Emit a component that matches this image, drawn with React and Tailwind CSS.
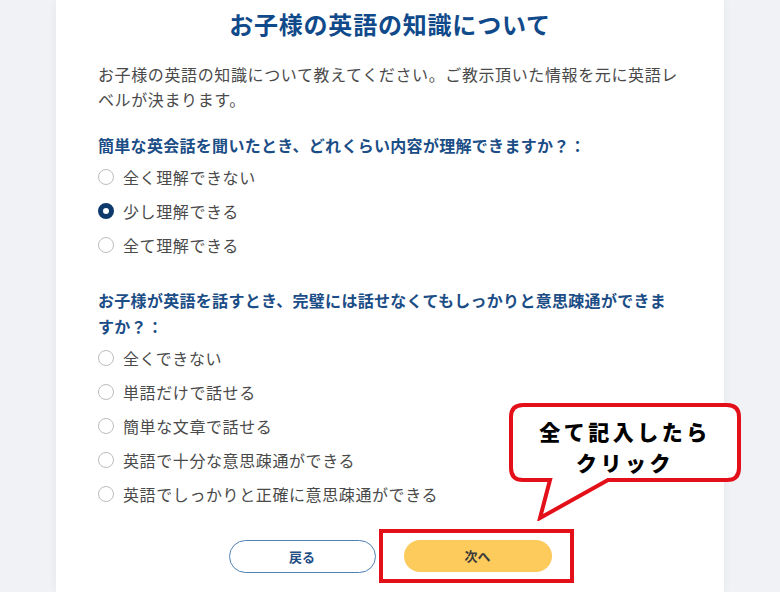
import { useState } from "react";

const q1Options = ["全く理解できない", "少し理解できる", "全て理解できる"];
const q2Options = [
  "全くできない",
  "単語だけで話せる",
  "簡単な文章で話せる",
  "英語で十分な意思疎通ができる",
  "英語でしっかりと正確に意思疎通ができる",
];

const Radio = ({ checked }) =>
  checked ? (
    <span className="block w-4 h-4 rounded-full border-[5px] border-[#0d3a6b] bg-white shrink-0" />
  ) : (
    <span className="block w-4 h-4 rounded-full border border-[#bdbdbd] bg-white shrink-0" />
  );

const Question = ({ label, options, value, onChange }) => (
  <div>
    <p className="text-[16px] leading-[26px] font-bold text-[#1b4d86] tracking-[0.3px]">{label}</p>
    <div className="mt-0.5">
      {options.map((opt, i) => (
        <button
          key={opt}
          type="button"
          onClick={() => onChange(i)}
          className="flex items-center gap-[9px] h-[34px] text-[16px] text-[#4a4a4a] tracking-[0.6px]"
        >
          <Radio checked={value === i} />
          <span>{opt}</span>
        </button>
      ))}
    </div>
  </div>
);

export default function App() {
  const [a1, setA1] = useState(1);
  const [a2, setA2] = useState(null);

  return (
    <div
      className="relative w-[780px] h-[592px] overflow-hidden bg-[#f0f2f5] flex justify-center"
      style={{ fontFamily: '"Noto Sans CJK JP", "Noto Sans", sans-serif' }}
    >
      <main className="w-[668px] h-full bg-white shadow-[0_0_10px_rgba(0,0,0,0.05)] px-[42px] pt-[7px]">
        <h1 className="text-center text-[24px] leading-[34px] font-bold text-[#104a8a] tracking-[0.8px]">
          お子様の英語の知識について
        </h1>

        <p className="mt-[21px] text-[16px] leading-[25px] text-[#4a4a4a] tracking-[0.62px]">
          お子様の英語の知識について教えてください。ご教示頂いた情報を元に英語レベルが決まります。
        </p>

        <div className="mt-[20px]">
          <Question
            label="簡単な英会話を聞いたとき、どれくらい内容が理解できますか？："
            options={q1Options}
            value={a1}
            onChange={setA1}
          />
        </div>

        <div className="mt-[25px]">
          <Question
            label="お子様が英語を話すとき、完璧には話せなくてもしっかりと意思疎通ができますか？："
            options={q2Options}
            value={a2}
            onChange={setA2}
          />
        </div>

        <div className="mt-[29px] flex justify-center gap-[28px]">
          <button
            type="button"
            className="w-[147px] h-[33px] rounded-full border-[1.5px] border-[#4f7fb3] text-[13px] font-bold text-[#1f4f85]"
          >
            戻る
          </button>
          <button
            type="button"
            className="w-[148px] h-[32px] rounded-full bg-[#fdca5c] text-[13px] font-bold text-[#3a3a3a]"
          >
            次へ
          </button>
        </div>
      </main>

      {/* annotation: red frame around next button */}
      <div className="absolute left-[379px] top-[529px] w-[195px] h-[54px] border-4 border-[#e3101a] pointer-events-none" />

      {/* annotation: speech bubble */}
      <div className="absolute left-[509px] top-[403px] w-[232px] h-[118px] pointer-events-none">
        <svg width="232" height="118" viewBox="0 0 232 118" className="absolute inset-0">
          <path
            d="M14,2 H218 Q230,2 230,14 V65 Q230,77 218,77 H99 L31,115 L41,77 H14 Q2,77 2,65 V14 Q2,2 14,2 Z"
            fill="#ffffff"
            stroke="#e3101a"
            strokeWidth="4"
            strokeLinejoin="miter"
          />
        </svg>
        <div className="relative pt-[13px] text-center text-[21px] leading-[31px] font-black text-black tracking-[3.5px]">
          <div>全て記入したら</div>
          <div>クリック</div>
        </div>
      </div>
    </div>
  );
}
